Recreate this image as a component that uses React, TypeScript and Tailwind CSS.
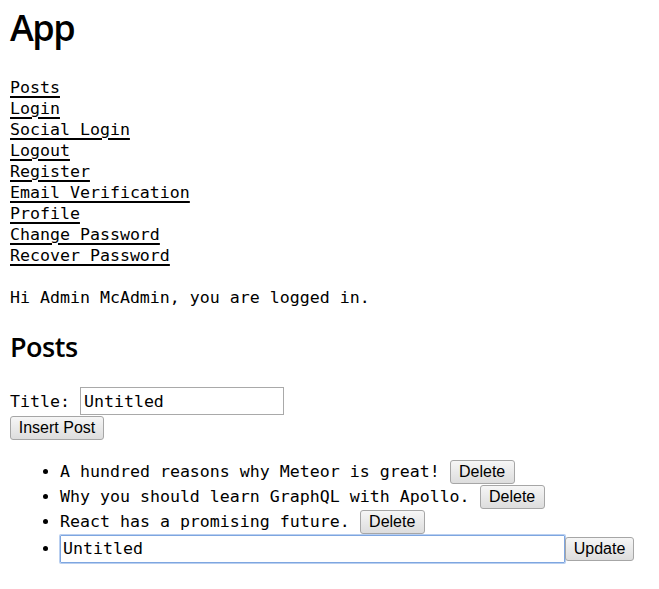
import React from "react";

const mono = { fontFamily: '"DejaVu Sans Mono", monospace' };

function Btn({ children, className = "" }: { children: React.ReactNode; className?: string }) {
  return (
    <button
      className={`h-[24px] px-[6px] whitespace-nowrap border border-[#a6a6a6] rounded-[3px] bg-gradient-to-b from-[#f6f6f6] to-[#dddddd] text-[16px] leading-none text-black font-['Liberation_Sans',Arial,sans-serif] ${className}`}
    >
      {children}
    </button>
  );
}

export default function App() {
  const links = [
    "Posts",
    "Login",
    "Social Login",
    "Logout",
    "Register",
    "Email Verification",
    "Profile",
    "Change Password",
    "Recover Password",
  ];
  return (
    <div className="bg-white min-h-[589px] w-[659px] px-[10px] text-black font-['DejaVu_Sans_Mono',monospace] text-[16.6px] leading-[21px]">
      <h1 className="pt-[6px] text-[36px] leading-[44px] font-semibold font-['Open_Sans',sans-serif] tracking-[-1.5px]">App</h1>
      <nav className="mt-[27px] flex flex-col items-start">
        {links.map((l) => (
          <a key={l} href="#" className="underline decoration-[2px] underline-offset-[3px] text-black">
            {l}
          </a>
        ))}
      </nav>
      <p className="mt-[21px]">Hi Admin McAdmin, you are logged in.</p>
      <h2 className="mt-[22px] text-[27px] leading-[34px] font-semibold font-['Open_Sans',sans-serif] tracking-[-0.5px]">Posts</h2>
      <div className="mt-[23px] flex items-center">
        <span>Title:&nbsp;</span>
        <input
          defaultValue="Untitled"
          className="ml-[0px] w-[204px] h-[28px] border border-[#a9a9a9] px-[3px] outline-none"
          style={mono}
        />
      </div>
      <div className="mt-[1px] flex">
        <Btn className="w-[94px] h-[24px]">Insert Post</Btn>
      </div>
      <ul className="mt-[19px] list-disc pl-[50px]">
        <li className="h-[25px]">
          <span className="inline-flex items-center h-[25px]">
            A hundred reasons why Meteor is great!&nbsp;<Btn className="w-[65px]">Delete</Btn>
          </span>
        </li>
        <li className="h-[25px]">
          <span className="inline-flex items-center h-[25px]">
            Why you should learn GraphQL with Apollo.&nbsp;<Btn className="w-[65px]">Delete</Btn>
          </span>
        </li>
        <li className="h-[25px]">
          <span className="inline-flex items-center h-[25px]">
            React has a promising future.&nbsp;<Btn className="w-[65px]">Delete</Btn>
          </span>
        </li>
        <li className="h-[29px]">
          <span className="inline-flex items-center h-[29px]">
            <input
              defaultValue="Untitled"
              className="w-[505px] h-[28px] border border-[#7ea6e0] rounded-[1px] shadow-[0_0_0_1px_#b9cff0] px-[2px] outline-none"
              style={mono}
            />
            <Btn className="w-[69px] ml-0">Update</Btn>
          </span>
        </li>
      </ul>
    </div>
  );
}
